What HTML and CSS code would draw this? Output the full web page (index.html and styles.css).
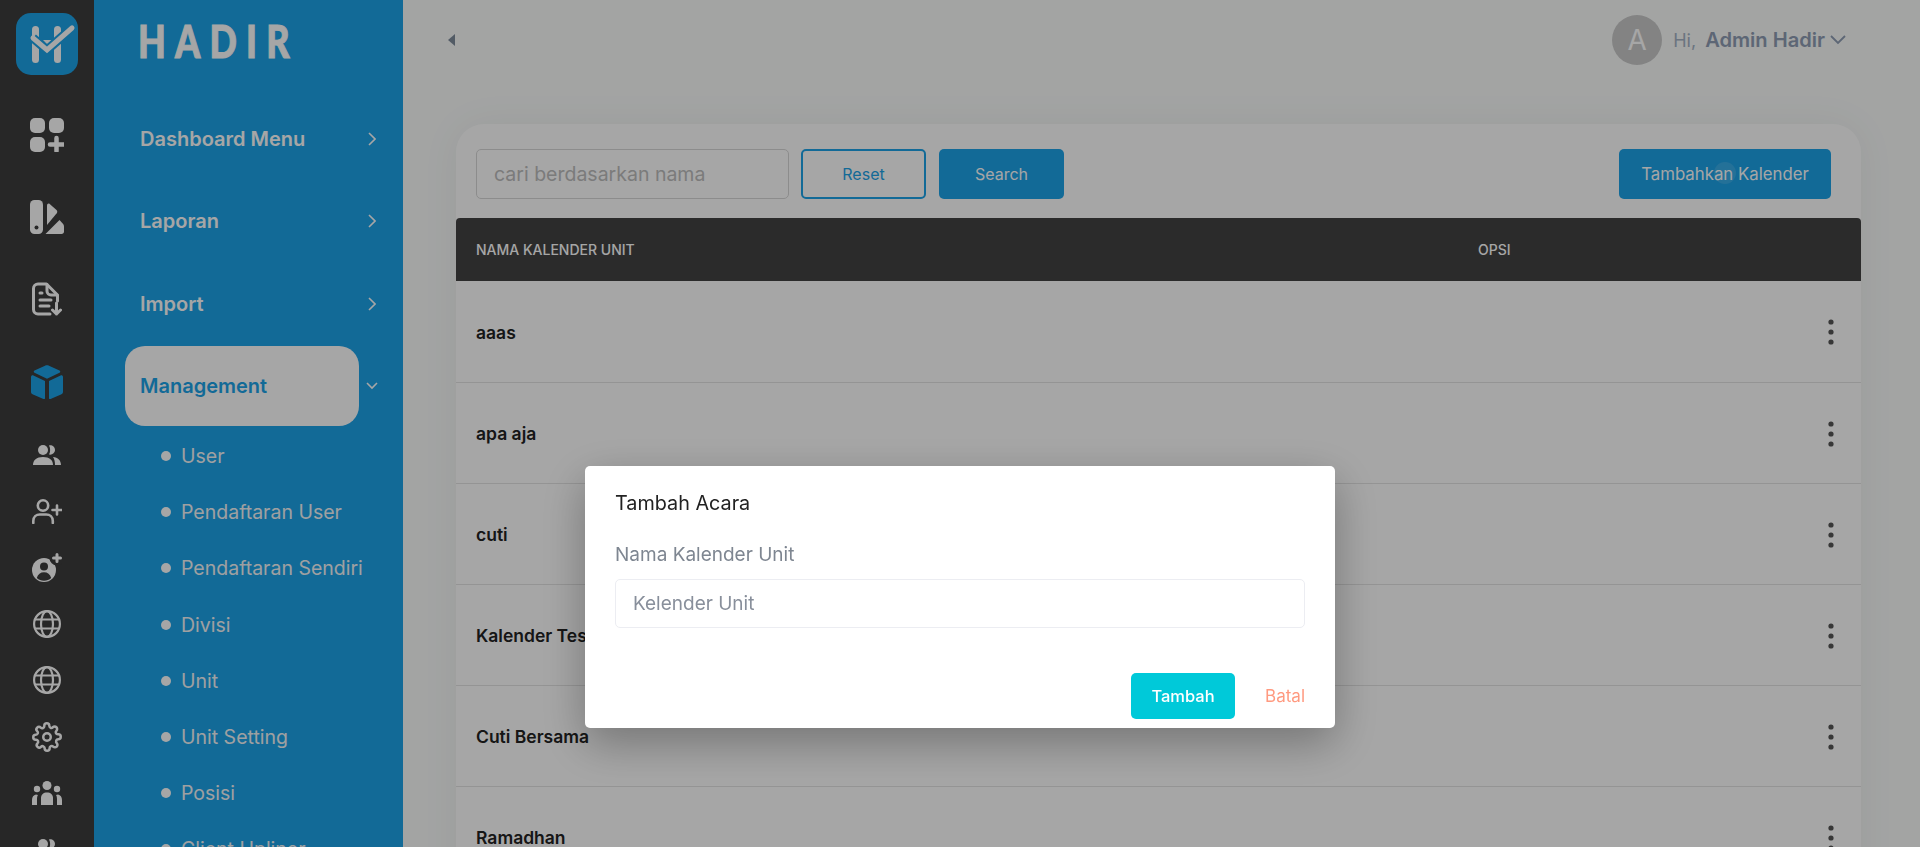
FILE: index.html
```html
<!DOCTYPE html>
<html lang="en">
<head>
<meta charset="UTF-8">
<meta name="viewport" content="width=device-width, initial-scale=1.0">
<title>Hadir - Kalender Unit</title>
<link rel="stylesheet" href="styles.css">
</head>
<body>
<div class="app">
  <nav class="rail">
    <div class="rail-logo">
      <svg width="62" height="62" viewBox="0 0 62 62"><rect width="62" height="62" rx="15" fill="#1da3e8"/><rect x="16" y="13" width="7" height="37" rx="3.500" fill="#fff"/><rect x="38" y="13" width="7" height="37" rx="3.500" fill="#fff"/><path d="M27 27h9l-4.500 5z" fill="#fff"/><path d="M17 25l14 12L56 15" fill="none" stroke="#1da3e8" stroke-width="9"/><path d="M17 25l14 12L56 15" fill="none" stroke="#fff" stroke-width="5" stroke-linecap="round"/></svg>
    </div>
    <a class="rail-slot"><svg width="34" height="34" viewBox="0 0 34 34" fill="#fff"><rect width="15" height="15" rx="5"/><rect x="19" width="15" height="15" rx="5"/><rect y="19" width="15" height="15" rx="5"/><path d="M26.500 20v13M20 26.500h14" stroke="#fff" stroke-width="4.500" stroke-linecap="round"/></svg></a>
    <a class="rail-slot"><svg width="34" height="34" viewBox="0 0 34 34"><rect width="13" height="34" rx="4.500" fill="#fff"/><circle cx="6.500" cy="27.500" r="2" fill="#3c3c3c"/><path d="M17 5.500c0-1.700 1.500-2.500 2.700-1.500l6.800 6c1 .9 1 2.200.2 3.300L17 25z" fill="#fff"/><path d="M15.500 34l14-14 3.200 3.500c.9 1 1.300 2 1.300 3.500v4.500c0 1.500-1 2.500-2.500 2.500z" fill="#fff"/></svg></a>
    <a class="rail-slot"><svg width="30" height="34" viewBox="0 0 30 34" fill="none" stroke="#fff" stroke-width="3" stroke-linecap="round" stroke-linejoin="round"><path d="M18 32H6c-2.500 0-4.500-2-4.500-4.500v-21C1.500 4 3.500 2 6 2h8.500L25.500 13v6"/><path d="M15 2.500V9c0 2.500 2 4 4 4h6"/><path d="M8 11h2M8 18h11M8 24h9"/><path d="M24.500 21v11M20.500 28l4 4 4-4"/></svg></a>
    <a class="rail-slot rail-slot-cube"><svg width="32" height="34" viewBox="0 0 32 34" fill="#1da3e8"><path d="M14 .8c1.300-.6 2.700-.6 4 0l10.500 4.700c1 .5 1 1.700 0 2.200L16 13.700 3.500 7.700c-1-.5-1-1.700 0-2.200z"/><path d="M0 12c0-1.300 1.300-2 2.400-1.500L14 16v17.300c0 .7-.7 1-1.300.8L2 29.500C.7 29 0 28 0 26.700z"/><path d="M32 12c0-1.300-1.300-2-2.400-1.500L18 16v17.300c0 .7.700 1 1.300.8L30 29.500c1.300-.5 2-1.500 2-2.800z"/></svg></a>
    <a class="rail-slot rail-slot-sm rail-slot-first"><svg width="28" height="20" viewBox="0 0 28 20" fill="#fff"><circle cx="10" cy="5" r="5"/><path d="M0 20c0-5 3.500-8 10-8s10 3 10 8z"/><path d="M16 .5c3-.8 6 1.500 6 4.500s-3 5.300-6 4.500c1.500-2.500 1.500-6.500 0-9z"/><path d="M20 12c5 .5 8 3.500 8 8h-6c0-3.500-.5-5.500-2-8z"/></svg></a>
    <a class="rail-slot rail-slot-sm"><svg width="30" height="25" viewBox="0 0 30 25" fill="none" stroke="#fff" stroke-width="2.600" stroke-linecap="round"><circle cx="11" cy="6.500" r="5.200"/><path d="M1.300 24v-2c0-4 3-6.500 6.500-6.500h6.500c3.500 0 6.500 2.500 6.500 6.500v2"/><path d="M25 6.500v9M20.500 11h9"/></svg></a>
    <a class="rail-slot rail-slot-sm"><svg width="30" height="29" viewBox="0 0 30 29"><circle cx="12" cy="17" r="12" fill="#fff"/><circle cx="12" cy="13.500" r="4" fill="#3c3c3c"/><path d="M4.800 25c1-3.800 3.700-5.800 7.200-5.800s6.200 2 7.200 5.800c-2 1.800-4.400 2.800-7.200 2.800s-5.200-1-7.200-2.800z" fill="#3c3c3c"/><circle cx="25" cy="5" r="7.500" fill="#3c3c3c"/><path d="M25 1.500v7M21.500 5h7" stroke="#fff" stroke-width="3" stroke-linecap="round"/></svg></a>
    <a class="rail-slot rail-slot-sm"><svg width="28" height="28" viewBox="0 0 28 28" fill="none" stroke="#fff" stroke-width="2.200"><circle cx="14" cy="14" r="12.900"/><ellipse cx="14" cy="14" rx="6" ry="12.900"/><path d="M2 9.500h24M2 18.500h24"/></svg></a>
    <a class="rail-slot rail-slot-sm"><svg width="28" height="28" viewBox="0 0 28 28" fill="none" stroke="#fff" stroke-width="2.200"><circle cx="14" cy="14" r="12.900"/><ellipse cx="14" cy="14" rx="6" ry="12.900"/><path d="M2 9.500h24M2 18.500h24"/></svg></a>
    <a class="rail-slot rail-slot-sm"><svg width="30" height="30" viewBox="0 0 24 24" fill="none" stroke="#fff" stroke-width="2" stroke-linejoin="round"><circle cx="12" cy="12" r="3"/><path d="M19.400 15a1.650 1.650 0 0 0 .33 1.820l.06.06a2 2 0 1 1-2.830 2.830l-.06-.06a1.650 1.650 0 0 0-2.800 1.170V21a2 2 0 0 1-4 0v-.09A1.650 1.650 0 0 0 7.300 19.800l-.06.06a2 2 0 1 1-2.830-2.830l.06-.06a1.650 1.650 0 0 0-1.170-2.800H3a2 2 0 0 1 0-4h.09A1.650 1.650 0 0 0 4.200 7.300l-.06-.06a2 2 0 1 1 2.830-2.830l.06.06a1.650 1.650 0 0 0 2.800-1.170V3a2 2 0 0 1 4 0v.09a1.650 1.650 0 0 0 2.800 1.170l.06-.06a2 2 0 1 1 2.830 2.830l-.06.06a1.650 1.650 0 0 0 1.170 2.800H21a2 2 0 0 1 0 4h-.09a1.650 1.650 0 0 0-1.510 1z"/></svg></a>
    <a class="rail-slot rail-slot-sm"><svg width="30" height="24" viewBox="0 0 30 24" fill="#fff"><circle cx="15" cy="4.500" r="4.500"/><circle cx="5" cy="8" r="3.200"/><circle cx="25" cy="8" r="3.200"/><path d="M9 24v-7c0-3.500 2.500-5.500 6-5.500s6 2 6 5.500v7z"/><path d="M0 24v-5c0-3 1.500-5 4-5.500l2 .5c-.7 1-1 2.500-1 4v6z"/><path d="M30 24v-5c0-3-1.500-5-4-5.500l-2 .5c.7 1 1 2.500 1 4v6z"/></svg></a>
    <a class="rail-slot rail-slot-sm"><svg width="28" height="20" viewBox="0 0 28 20" fill="#fff"><circle cx="10" cy="5" r="5"/><path d="M0 20c0-5 3.500-8 10-8s10 3 10 8z"/><path d="M16 .5c3-.8 6 1.500 6 4.500s-3 5.300-6 4.500c1.500-2.500 1.500-6.500 0-9z"/><path d="M20 12c5 .5 8 3.500 8 8h-6c0-3.500-.5-5.500-2-8z"/></svg></a>
  </nav>

  <aside class="sidebar">
    <div class="brand"><span class="brand-text">HADIR</span></div>
    <div class="menu-row">
      <a class="menu-label">Dashboard Menu</a>
      <svg class="menu-chev" width="8" height="14" viewBox="0 0 8 14"><path d="M1 1l6 6-6 6"/></svg>
    </div>
    <div class="menu-row">
      <a class="menu-label">Laporan</a>
      <svg class="menu-chev" width="8" height="14" viewBox="0 0 8 14"><path d="M1 1l6 6-6 6"/></svg>
    </div>
    <div class="menu-row">
      <a class="menu-label">Import</a>
      <svg class="menu-chev" width="8" height="14" viewBox="0 0 8 14"><path d="M1 1l6 6-6 6"/></svg>
    </div>
    <div class="menu-row menu-row-active">
      <a class="menu-label">Management</a>
      <svg class="menu-chev" width="12" height="8" viewBox="0 0 12 8"><path d="M1 1l5 5 5-5"/></svg>
    </div>
    <ul class="submenu">
      <li>User</li>
      <li>Pendaftaran User</li>
      <li>Pendaftaran Sendiri</li>
      <li>Divisi</li>
      <li>Unit</li>
      <li>Unit Setting</li>
      <li>Posisi</li>
      <li>Client Upliner</li>
    </ul>
  </aside>

  <main class="main">
    <header class="topbar">
      <svg class="collapse" width="7" height="12" viewBox="0 0 7 12"><path d="M7 0v12L0 6z"/></svg>
      <div class="account">
        <span class="avatar">A</span>
        <span class="hi">Hi,</span>
        <span class="account-name">Admin Hadir</span>
        <svg class="account-chev" width="16" height="10" viewBox="0 0 16 10"><path d="M1 1l7 7 7-7"/></svg>
      </div>
    </header>

    <section class="card">
      <div class="toolbar">
        <input class="search-input" type="text" placeholder="cari berdasarkan nama">
        <button class="btn btn-outline">Reset</button>
        <button class="btn btn-primary">Search</button>
        <button class="btn btn-primary btn-add">Tambahkan Kalender<span class="ripple"></span></button>
      </div>
      <table class="unit-table">
        <thead>
          <tr><th class="col-name">NAMA KALENDER UNIT</th><th>OPSI</th></tr>
        </thead>
        <tbody>
          <tr><td>aaas</td><td class="col-opt"><svg class="dots" width="6" height="26" viewBox="0 0 6 26"><circle cx="3" cy="3" r="2.600"/><circle cx="3" cy="13" r="2.600"/><circle cx="3" cy="23" r="2.600"/></svg></td></tr>
          <tr><td>apa aja</td><td class="col-opt"><svg class="dots" width="6" height="26" viewBox="0 0 6 26"><circle cx="3" cy="3" r="2.600"/><circle cx="3" cy="13" r="2.600"/><circle cx="3" cy="23" r="2.600"/></svg></td></tr>
          <tr><td>cuti</td><td class="col-opt"><svg class="dots" width="6" height="26" viewBox="0 0 6 26"><circle cx="3" cy="3" r="2.600"/><circle cx="3" cy="13" r="2.600"/><circle cx="3" cy="23" r="2.600"/></svg></td></tr>
          <tr><td>Kalender Test</td><td class="col-opt"><svg class="dots" width="6" height="26" viewBox="0 0 6 26"><circle cx="3" cy="3" r="2.600"/><circle cx="3" cy="13" r="2.600"/><circle cx="3" cy="23" r="2.600"/></svg></td></tr>
          <tr><td>Cuti Bersama</td><td class="col-opt"><svg class="dots" width="6" height="26" viewBox="0 0 6 26"><circle cx="3" cy="3" r="2.600"/><circle cx="3" cy="13" r="2.600"/><circle cx="3" cy="23" r="2.600"/></svg></td></tr>
          <tr><td>Ramadhan</td><td class="col-opt"><svg class="dots" width="6" height="26" viewBox="0 0 6 26"><circle cx="3" cy="3" r="2.600"/><circle cx="3" cy="13" r="2.600"/><circle cx="3" cy="23" r="2.600"/></svg></td></tr>
        </tbody>
      </table>
    </section>
  </main>
</div>

<div class="overlay">
  <div class="modal">
    <h2 class="modal-title">Tambah Acara</h2>
    <label class="modal-label" for="unitName">Nama Kalender Unit</label>
    <input class="modal-input" id="unitName" type="text" placeholder="Kelender Unit">
    <div class="modal-actions">
      <button class="btn-add-event">Tambah</button>
      <a class="btn-cancel">Batal</a>
    </div>
  </div>
</div>
</body>
</html>
```

FILE: styles.css
```css
* {
  margin: 0;
  padding: 0;
  box-sizing: border-box;
  font-family: 'Inter', sans-serif;
}
body {
  height: 100vh;
  overflow: hidden;
  background-color: #fafcfb;
}
.app {
  display: flex;
  height: 847px;
  overflow: hidden;
}

/* icon rail */
.rail {
  width: 94px;
  flex-shrink: 0;
  background-color: #3c3c3c;
  display: flex;
  flex-direction: column;
  align-items: center;
}
.rail-logo {
  height: 94px;
  flex-shrink: 0;
  padding-top: 13px;
}
.rail-slot {
  height: 82px;
  flex-shrink: 0;
  display: flex;
  align-items: center;
  justify-content: center;
}
.rail-slot-cube {
  height: 84px;
}
.rail-slot-sm {
  height: 56.3px;
}
.rail-slot-first {
  margin-top: 3px;
}

/* menu */
.sidebar {
  width: 309px;
  flex-shrink: 0;
  background-color: #1da3e8;
  padding-left: 31px;
  color: #fff;
}
.brand {
  height: 98px;
  padding: 14px 0 0 13px;
  line-height: 54px;
}
.brand-text {
  font-family: 'Lato', sans-serif;
  font-size: 45px;
  font-weight: 900;
  letter-spacing: 11.5px;
  -webkit-text-stroke: 1px #fff;
  paint-order: stroke;
  display: inline-block;
  transform: scaleX(0.8);
  transform-origin: left;
}
.menu-row {
  height: 82.33px;
  display: flex;
  align-items: center;
}
.menu-label {
  width: 234px;
  height: 80px;
  padding-left: 15px;
  display: flex;
  align-items: center;
  border-radius: 20px;
  font-size: 20px;
  font-weight: 600;
}
.menu-chev {
  margin-left: 9px;
  fill: none;
  stroke: #fff;
  stroke-width: 1.600;
}
.menu-row-active {
  height: 80px;
  margin: 1px 0 2px;
}
.menu-row-active .menu-label {
  background-color: #fff;
  color: #1da3e8;
}
.menu-row-active .menu-chev {
  margin-left: 7px;
}
.submenu {
  list-style: none;
  padding-left: 36px;
}
.submenu li {
  height: 56.2px;
  display: flex;
  align-items: center;
  font-size: 19.5px;
  color: #f4f6f8;
}
.submenu li::before {
  content: "";
  width: 10px;
  height: 10px;
  margin-right: 10px;
  border-radius: 50%;
  background-color: #fff;
}

/* main column */
.main {
  flex-grow: 1;
  padding: 0 59px 0 53px;
}
.topbar {
  height: 80px;
  margin-bottom: 44px;
  display: flex;
  align-items: center;
  justify-content: space-between;
}
.collapse {
  fill: #7f8c9c;
  margin-left: -8px;
}
.account {
  display: flex;
  align-items: center;
  margin-right: 15px;
  font-size: 20.1px;
  color: #a5b3c5;
}
.avatar {
  width: 50px;
  height: 50px;
  margin-right: 11px;
  border-radius: 50%;
  background-color: #c9c9c9;
  color: #fff;
  font-size: 28px;
  display: flex;
  align-items: center;
  justify-content: center;
}
.hi {
  margin-right: 9px;
  font-size: 18px;
}
.account-name {
  font-weight: 600;
  color: #8f9db4;
}
.account-chev {
  margin-left: 5px;
  fill: none;
  stroke: #8f9db4;
  stroke-width: 1.800;
}
.card {
  background-color: #fff;
  border-radius: 28px 28px 0 0;
  box-shadow: 0 0 40px rgba(0,0,0,0.05);
  height: 800px;
}
.toolbar {
  display: flex;
  align-items: center;
  padding: 25px 30px 19px 20px;
}
.search-input {
  width: 313px;
  height: 50px;
  padding: 0 17px;
  margin-right: 12px;
  border: 1px solid #d8d8d8;
  border-radius: 5px;
  background: none;
  font-size: 19.5px;
}
.search-input::placeholder {
  color: #bdbdbd;
}
.btn {
  height: 50px;
  width: 125px;
  border-radius: 5px;
  border: none;
  font-size: 16px;
  margin-right: 13px;
  cursor: pointer;
}
.btn-outline {
  background: none;
  border: 2px solid #1da3e8;
  color: #1da3e8;
}
.btn-primary {
  background-color: #1da3e8;
  color: #fff;
}
.btn-add {
  position: relative;
  width: 212px;
  margin: 0 0 0 auto;
  font-size: 16.8px;
}
.ripple {
  position: absolute;
  left: 95px;
  top: 13px;
  width: 22px;
  height: 22px;
  border-radius: 50%;
  background-color: rgba(255,255,255,0.12);
}
.unit-table {
  width: 100%;
  border-collapse: collapse;
}
.unit-table thead tr {
  background-color: #424242;
  color: #fff;
  height: 63px;
}
.unit-table th {
  text-align: left;
  padding-left: 20px;
  font-size: 14px;
  font-weight: 500;
}
.unit-table th:first-child {
  border-top-left-radius: 4px;
}
.unit-table th:last-child {
  border-top-right-radius: 4px;
}
.col-name {
  width: 1002px;
}
.unit-table td {
  height: 101px;
  padding: 2px 0 0 20px;
  border-bottom: 1px solid #e4e4e4;
  font-size: 17.5px;
  font-weight: 600;
  color: #222;
}
.unit-table .col-opt {
  text-align: right;
  padding-right: 27px;
}
.dots {
  fill: #555;
  vertical-align: middle;
}

/* dialog */
.overlay {
  position: fixed;
  top: 0;
  left: 0;
  right: 0;
  bottom: 0;
  background-color: rgba(0,0,0,0.35);
  display: flex;
  justify-content: center;
  padding-top: 466px;
}
.modal {
  width: 750px;
  height: 262px;
  padding: 23px 30px 10px;
  background-color: #fff;
  border-radius: 5px;
  box-shadow: 0 15px 45px rgba(0,0,0,0.3);
}
.modal-title {
  font-size: 19.8px;
  font-weight: 400;
  line-height: 28px;
  color: #222;
  margin-bottom: 24px;
}
.modal-label {
  display: block;
  font-size: 19px;
  line-height: 28px;
  color: #7e8691;
  margin-bottom: 10px;
}
.modal-input {
  display: block;
  width: 100%;
  height: 49px;
  padding: 0 17px;
  border: 1px solid #ecedf2;
  border-radius: 5px;
  font-size: 19px;
}
.modal-input::placeholder {
  color: #888f9b;
}
.modal-actions {
  display: flex;
  justify-content: flex-end;
  align-items: center;
  margin-top: 45px;
}
.btn-add-event {
  width: 104px;
  height: 46px;
  border: none;
  border-radius: 5px;
  background-color: #00c9d9;
  color: #fff;
  font-size: 16.5px;
  font-weight: 500;
}
.btn-cancel {
  margin-left: 30px;
  color: #ff9a80;
  font-size: 17px;
}
```
